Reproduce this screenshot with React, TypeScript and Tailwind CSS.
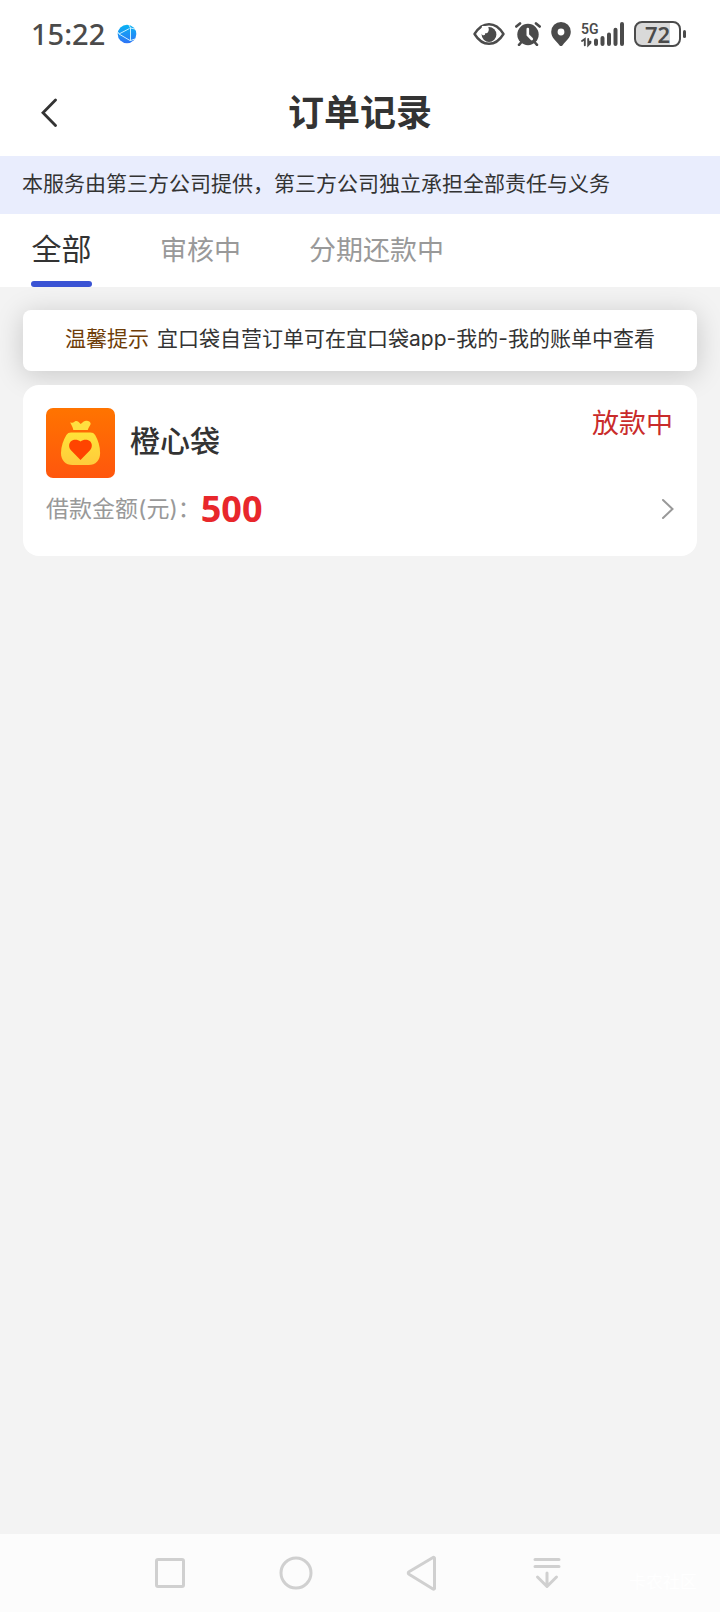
import type { ReactNode } from 'react';

interface Order {
  name: string;
  status: string;
  amount: number;
}

const tabs = ['全部', '审核中', '分期还款中'];

const orders: Order[] = [{ name: '橙心袋', status: '放款中', amount: 500 }];

export default function App() {
  return (
    <div className="flex min-h-screen flex-col bg-[#f3f3f3] font-[Inter,'Noto_Sans_CJK_SC',sans-serif] text-[#333]">
      <StatusBar />
      <Header />
      <p className="bg-[#e9edfd] px-[22px] pt-[13px] pb-[15px] text-[21px] leading-[30px]">
        本服务由第三方公司提供，第三方公司独立承担全部责任与义务
      </p>
      <Tabs />
      <main className="flex flex-1 flex-col gap-[14px] px-[23px] pt-[23px]">
        <p className="rounded-lg bg-white px-4 pt-[14px] pb-[17px] text-center text-[21px] leading-[30px] shadow-[0_4px_28px_rgba(0,0,0,0.18)]">
          <span className="mr-2 text-[#6f3d08]">温馨提示</span>
          宜口袋自营订单可在宜口袋app-我的-我的账单中查看
        </p>
        {orders.map((order) => (
          <OrderCard key={order.name} order={order} />
        ))}
      </main>
      <SystemNav />
    </div>
  );
}

function StatusBar() {
  return (
    <div className="flex h-[68px] items-center justify-between bg-white pr-[34px] pl-[31px] text-[#4b4b4b]">
      <div className="flex items-center gap-3">
        <span className="font-['Noto_Sans',sans-serif] text-[29px] leading-9 font-medium">15:22</span>
        <svg width="20" height="20" viewBox="0 0 20 20">
          <defs>
            <linearGradient id="globe" x1="0" y1="0" x2="0" y2="1">
              <stop offset="0" stopColor="#08b4f4" />
              <stop offset="1" stopColor="#2f74f6" />
            </linearGradient>
          </defs>
          <circle cx="10" cy="10" r="9.3" fill="url(#globe)" />
          <path d="M2 10 12.500 4.500M2 10l11 6.500M13.500 4v13M12 1l1.500 3L18 5M13.500 16.500 18 15M2 10 1 8" fill="none" stroke="#c9f1ff" strokeWidth="1" />
        </svg>
      </div>
      <div className="flex items-center gap-[10px]">
        <svg width="32" height="24" viewBox="0 0 32 24" fill="none">
          <path d="M1.500 12C5.500 5.500 10.500 2.200 16 2.200S26.500 5.500 30.500 12C26.500 18.500 21.500 21.800 16 21.800S5.500 18.500 1.500 12Z" stroke="currentColor" strokeWidth="2.400" strokeLinejoin="round" />
          <circle cx="16" cy="12.500" r="7.400" fill="currentColor" />
          <path d="M8 11.500 9 4h5.500c1.600 2.200 1.700 4.200.6 5.900-1 1.500-2.300 1.600-3 1.300.2 1.100-.3 1.900-1.300 2.100-1 .1-1.900-.5-2.800-1.800Z" fill="white" />
        </svg>
        <svg width="26" height="24" viewBox="0 0 26 24" fill="none" stroke="currentColor" strokeLinecap="round">
          <circle cx="13" cy="12.500" r="10.700" fill="currentColor" stroke="none" />
          <path d="M1.300 4.500 5 1.400M24.700 4.500 21 1.400M6.500 20 4 22.800M19.500 20l2.500 2.800" strokeWidth="2.600" />
          <path d="M12.800 7v6l4 4" stroke="white" strokeWidth="2.600" />
        </svg>
        <svg width="20" height="24" viewBox="0 0 20 24">
          <path d="M10 0a9.800 9.800 0 0 0-9.800 9.800C.2 15.500 5 19 8.400 23.200a2.100 2.100 0 0 0 3.200 0C15 19 19.800 15.500 19.800 9.800A9.800 9.800 0 0 0 10 0Zm0 6.600a3.400 3.400 0 1 1 0 6.800 3.400 3.400 0 0 1 0-6.800Z" fill="currentColor" fillRule="evenodd" />
        </svg>
        <svg className="overflow-visible" width="43" height="24" viewBox="0 0 43 24" fill="none" stroke="currentColor" strokeLinecap="round">
          <text x="0" y="12" fill="currentColor" stroke="none" className="font-[Roboto,sans-serif] text-[14px] font-semibold">
            5G
          </text>
          <path d="M1 19 3.800 17v6.200M7.200 17v6.200l2.300-2.400M7.200 19.800h2.300" strokeWidth="1.900" />
          <path d="M15 18.500v3.500M21.500 16v6M28 12.500v9.500M34.500 7.800V22M41 2v20" strokeWidth="4" />
        </svg>
        <div className="flex items-center gap-[2px]">
          <div className="flex h-[26px] w-[47px] items-center justify-center rounded-lg border-2 border-current bg-linear-to-r from-[#d9d9d9] from-80% to-white to-80% font-['Noto_Sans',sans-serif] text-[22px] leading-6 font-semibold">
            72
          </div>
          <div className="h-2 w-[3px] rounded-sm bg-current" />
        </div>
      </div>
    </div>
  );
}

function Header() {
  return (
    <header className="grid h-[88px] grid-cols-[60px_1fr_60px] items-center bg-white">
      <button type="button" aria-label="返回" className="flex h-full items-center justify-end pr-[3px]">
        <svg width="16" height="30" viewBox="0 0 16 30" fill="none" stroke="#333" strokeWidth="2.800" strokeLinecap="round">
          <path d="M14.500 3 2 15.800l12.500 12.700" />
        </svg>
      </button>
      <h1 className="pt-[2px] text-center text-[36px] leading-[44px] font-bold">订单记录</h1>
    </header>
  );
}

function Tabs() {
  return (
    <nav className="flex h-[73px] gap-[68px] bg-white px-[31px]">
      {tabs.map((tab, index) => (
        <button
          key={tab}
          type="button"
          className={
            index === 0
              ? 'flex flex-col justify-between pt-[13px] text-[30px] leading-[44px]'
              : 'flex flex-col pt-[15px] text-[27px] leading-[44px] text-[#999]'
          }
        >
          {tab}
          {index === 0 && <span className="h-[6px] w-[61px] rounded-full bg-[#3a53d4]" />}
        </button>
      ))}
    </nav>
  );
}

function OrderCard({ order }: { order: Order }) {
  return (
    <section className="rounded-2xl bg-white px-[23px] pt-[23px] pb-6">
      <div className="flex items-start">
        <MoneyBag />
        <h2 className="ml-[14px] flex-1 pt-[13px] text-[30px] leading-10 font-medium">{order.name}</h2>
        <span className="pr-[1px] text-[27px] leading-8 text-[#c92b2b]">{order.status}</span>
      </div>
      <a href="#order" className="mt-2 flex h-[46px] items-center">
        <span className="text-[23px] text-[#999]">借款金额(元)：</span>
        <span className="font-['Noto_Sans',sans-serif] text-[36px] leading-[46px] font-bold text-[#e8272b]">{order.amount}</span>
        <svg className="ml-auto" width="14" height="22" viewBox="0 0 14 22" fill="none" stroke="#999" strokeWidth="2" strokeLinecap="round">
          <path d="m3 2 9.500 9L3 20" />
        </svg>
      </a>
    </section>
  );
}

function MoneyBag() {
  return (
    <svg width="70" height="70" viewBox="0 0 70 70">
      <defs>
        <linearGradient id="tile" x1="0" y1="0" x2="0" y2="1">
          <stop offset="0" stopColor="#ff7400" />
          <stop offset="1" stopColor="#ff560d" />
        </linearGradient>
        <linearGradient id="bag" x1="0" y1="0" x2="0" y2="1">
          <stop offset="0" stopColor="#ffe238" />
          <stop offset="1" stopColor="#ffcb3c" />
        </linearGradient>
      </defs>
      <rect width="69" height="70" rx="7" fill="url(#tile)" />
      <path d="M24.200 14.600c2 .4 3.300-.2 4.600-1.200 1.300-.8 2.600-.5 3.600.4l2.300 2.200 3-2.400c1.600-1.300 2.800-.9 4.300-.7 2 .2 3.200 2.200 2.400 3.900-1 1.700-2 3-2.600 5.200H27.300c-.5-2.900-1.700-4.700-3.100-7.400Z" fill="#ffe040" />
      <path d="M25 24.500h19.500c2 0 3.500.8 4.600 2.500 3 5 5 11.500 5 18 0 7.500-4.500 12-11.500 12H26.500C19.500 57 15 52.500 15 45c0-6.500 2.300-13 5.400-18 1.100-1.700 2.600-2.500 4.600-2.500Z" fill="url(#bag)" />
      <path d="M34.500 52 25.200 42.500c-3-3.200-2.500-7.500.1-9.500 2.800-2 6.800-1.300 9.200.5 2.400-1.800 6.400-2.500 9.200-.5 2.600 2 3.100 6.300.1 9.500Z" fill="#ff4400" />
    </svg>
  );
}

function NavButton({ label, children }: { label: string; children: ReactNode }) {
  return (
    <button type="button" aria-label={label} className="flex flex-1 justify-center">
      <svg width="34" height="36" viewBox="0 0 34 36" fill="none" stroke="#d0d0d0" strokeWidth="3" strokeLinecap="round" strokeLinejoin="round">
        {children}
      </svg>
    </button>
  );
}

function SystemNav() {
  return (
    <footer className="relative flex h-[78px] items-center bg-[#fcfcfc] pr-[109px] pl-[107px]">
      <NavButton label="最近任务">
        <rect x="3.500" y="4.500" width="27" height="27" rx="1.500" />
      </NavButton>
      <NavButton label="主页">
        <circle cx="17" cy="18" r="15" />
      </NavButton>
      <NavButton label="返回">
        <path d="M29.500 3.500v30a1 1 0 0 1-1.500.5L4 19.300a1.500 1.500 0 0 1 0-2.600L28 2.500a1 1 0 0 1 1.500 1Z" />
      </NavButton>
      <NavButton label="收起">
        <path d="M4 4.500h24M4 11.500h24M16 18v13M6.500 22 16 31.500 25.500 22" />
      </NavButton>
      <span className="absolute right-[23px] bottom-[18px] text-[17px] leading-6 text-white">卡农社区</span>
    </footer>
  );
}
